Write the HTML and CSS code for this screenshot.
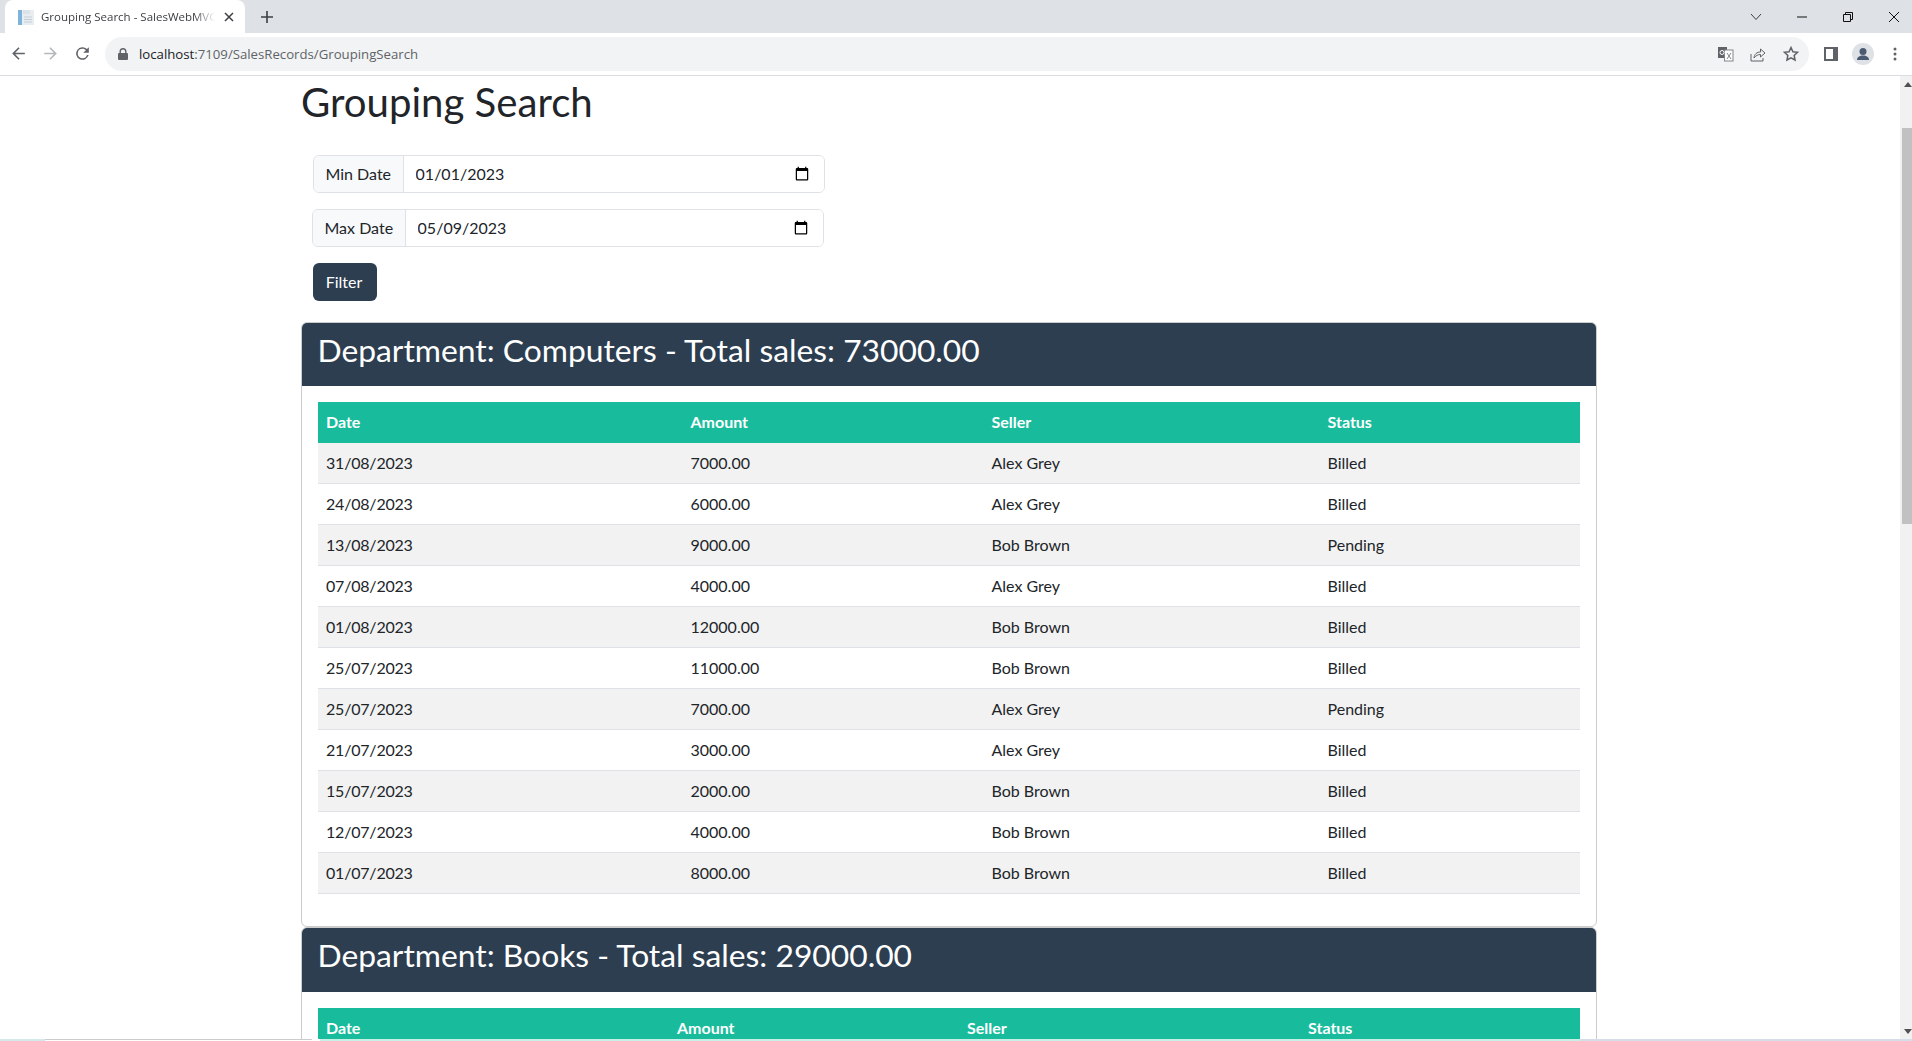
FILE: index.html
```html
<!DOCTYPE html>
<html lang="en">
<head>
<meta charset="utf-8">
<title>Grouping Search - SalesWebMVC</title>
<link rel="stylesheet" href="styles.css">
</head>
<body>
<div class="browser">
  <header class="tabstrip">
    <div class="tab">
      <svg class="favicon" viewBox="0 0 16 16" width="16" height="16"><rect x="0" y="1" width="16" height="15" fill="#e8edf2"/><rect x="0" y="1" width="4" height="15" fill="#7fb4da"/><rect x="5" y="1" width="7" height="4" fill="#dbe2e8"/><path d="M6 8h8M6 10.500h8M6 13h8" stroke="#c5ced6" stroke-width="1"/></svg>
      <span class="tab-title">Grouping Search - SalesWebMVC</span>
      <svg class="tab-close" viewBox="0 0 10 10" width="10" height="10"><path d="M1 1l8 8M9 1l-8 8" stroke="#3c4043" stroke-width="1.500"/></svg>
    </div>
    <svg class="new-tab" viewBox="0 0 12 12" width="12" height="12"><path d="M6 0v12M0 6h12" stroke="#3c4043" stroke-width="1.600"/></svg>
    <div class="window-controls">
      <svg class="wc wc-chevron" viewBox="0 0 12 8" width="12" height="8"><path d="M1 1l5 5.500L11 1" fill="none" stroke="#3c4043" stroke-width="1"/></svg>
      <svg class="wc wc-min" viewBox="0 0 10 2" width="10" height="2"><path d="M0 1h10" stroke="#111" stroke-width="1"/></svg>
      <svg class="wc wc-max" viewBox="0 0 10 10" width="10" height="10"><path d="M2.500 2.500V.5h7v7h-2M.5 2.500h7v7h-7z" fill="none" stroke="#111" stroke-width="1"/></svg>
      <svg class="wc wc-close" viewBox="0 0 10 10" width="10" height="10"><path d="M0 0l10 10M10 0L0 10" stroke="#111" stroke-width="1"/></svg>
    </div>
  </header>
  <nav class="toolbar">
    <svg class="nav-btn" viewBox="0 0 24 24" width="19" height="19"><path fill="#5f6368" d="M20 11H7.830l5.590-5.590L12 4l-8 8 8 8 1.410-1.410L7.830 13H20v-2z"/></svg>
    <svg class="nav-btn" viewBox="0 0 24 24" width="19" height="19"><path fill="#b4b7bb" d="M4 11h12.170l-5.590-5.590L12 4l8 8-8 8-1.410-1.410L16.170 13H4v-2z"/></svg>
    <svg class="nav-btn" viewBox="0 0 24 24" width="19" height="19"><path fill="#5f6368" d="M17.650 6.350A8 8 0 1 0 19.730 14h-2.080A6 6 0 1 1 12 6c1.660 0 3.140.69 4.220 1.780L13 11h7V4l-2.350 2.350z"/></svg>
    <div class="omnibox">
      <svg class="lock" viewBox="0 0 10 12" width="10" height="12"><path fill="#5f6368" d="M1.500 5V3.500a3.500 3.500 0 0 1 7 0V5h.5a1 1 0 0 1 1 1v5a1 1 0 0 1-1 1H1a1 1 0 0 1-1-1V6a1 1 0 0 1 1-1zm1.400 0h4.200V3.500a2.100 2.100 0 0 0-4.200 0z"/></svg>
      <span class="url"><span class="url-host">localhost</span>:7109/SalesRecords/GroupingSearch</span>
      <div class="omni-actions">
        <svg viewBox="0 0 16 16" width="16" height="16"><rect x="0" y="1" width="9" height="11" fill="#5f6368"/><rect x="6.500" y="4" width="8.500" height="11" fill="#fff" stroke="#80868b"/><circle cx="4" cy="6.500" r="2" fill="none" stroke="#fff"/><path d="M9 7l4 6M13 7l-4 6" stroke="#80868b"/></svg>
        <svg viewBox="0 0 16 16" width="16" height="16"><path d="M1 8v7h12v-3" fill="none" stroke="#5f6368"/><path d="M4 12c.3-4 3-6 6.500-6V3l4.500 4-4.500 4V8.500C8 8.500 6 9.500 4 12z" fill="none" stroke="#5f6368"/></svg>
        <svg viewBox="0 0 24 24" width="18" height="18"><path fill="none" stroke="#5f6368" stroke-width="2" d="M12 3.500l2.600 5.600 6.100.7-4.500 4.200 1.200 6-5.400-3-5.400 3 1.200-6-4.500-4.200 6.100-.7z"/></svg>
      </div>
    </div>
    <div class="toolbar-end">
      <svg viewBox="0 0 14 14" width="14" height="14"><rect width="14" height="14" fill="#5f6368"/><rect x="2" y="2" width="7" height="10" fill="#fff"/></svg>
      <svg viewBox="0 0 22 22" width="22" height="22"><circle cx="11" cy="11" r="11" fill="#dee1e6"/><circle cx="11" cy="8.500" r="3.500" fill="#4a5a70"/><path d="M5 17c0-3 2.500-4.500 6-4.500s6 1.500 6 4.500z" fill="#4a5a70"/></svg>
      <svg viewBox="0 0 4 14" width="4" height="14"><circle cx="2" cy="2" r="1.500" fill="#5f6368"/><circle cx="2" cy="7" r="1.500" fill="#5f6368"/><circle cx="2" cy="12" r="1.500" fill="#5f6368"/></svg>
    </div>
  </nav>
  <div class="viewport">
    <main class="page">
      <div class="container">
        <h1 class="title">Grouping Search</h1>
        <form class="filter">
          <div class="input-group">
            <span class="input-label">Min Date</span>
            <input class="input-date" type="date" value="2023-01-01">
          </div>
          <div class="input-group input-group-max">
            <span class="input-label">Max Date</span>
            <input class="input-date" type="date" value="2023-05-09">
          </div>
          <button class="btn" type="button">Filter</button>
        </form>
        <section class="card">
          <div class="card-header"><h2 class="card-title">Department: Computers - Total sales: 73000.00</h2></div>
          <div class="card-body">
            <table class="table table-computers">
              <colgroup><col class="c1"><col class="c2"><col class="c3"><col class="c4"></colgroup>
              <thead><tr><th>Date</th><th>Amount</th><th>Seller</th><th>Status</th></tr></thead>
              <tbody>
                <tr><td>31/08/2023</td><td>7000.00</td><td>Alex Grey</td><td>Billed</td></tr>
                <tr><td>24/08/2023</td><td>6000.00</td><td>Alex Grey</td><td>Billed</td></tr>
                <tr><td>13/08/2023</td><td>9000.00</td><td>Bob Brown</td><td>Pending</td></tr>
                <tr><td>07/08/2023</td><td>4000.00</td><td>Alex Grey</td><td>Billed</td></tr>
                <tr><td>01/08/2023</td><td>12000.00</td><td>Bob Brown</td><td>Billed</td></tr>
                <tr><td>25/07/2023</td><td>11000.00</td><td>Bob Brown</td><td>Billed</td></tr>
                <tr><td>25/07/2023</td><td>7000.00</td><td>Alex Grey</td><td>Pending</td></tr>
                <tr><td>21/07/2023</td><td>3000.00</td><td>Alex Grey</td><td>Billed</td></tr>
                <tr><td>15/07/2023</td><td>2000.00</td><td>Bob Brown</td><td>Billed</td></tr>
                <tr><td>12/07/2023</td><td>4000.00</td><td>Bob Brown</td><td>Billed</td></tr>
                <tr><td>01/07/2023</td><td>8000.00</td><td>Bob Brown</td><td>Billed</td></tr>
              </tbody>
            </table>
          </div>
        </section>
        <section class="card card-next">
          <div class="card-header"><h2 class="card-title">Department: Books - Total sales: 29000.00</h2></div>
          <div class="card-body">
            <table class="table table-books">
              <colgroup><col class="c1"><col class="c2"><col class="c3"><col class="c4"></colgroup>
              <thead><tr><th>Date</th><th>Amount</th><th>Seller</th><th>Status</th></tr></thead>
            </table>
          </div>
        </section>
      </div>
    </main>
    <aside class="scrollbar">
      <span class="arrow arrow-up"></span>
      <span class="thumb"></span>
      <span class="arrow arrow-down"></span>
    </aside>
  </div>
  <div class="bottom-edge"><span class="bottom-edge-gap"></span></div>
</div>
</body>
</html>
```
FILE: styles.css
```css
* { box-sizing: border-box; }
html, body { margin: 0; height: 100%; overflow: hidden; background: #fff; }
body { font-family: "Lato", "Liberation Sans", sans-serif; font-size: 16px; line-height: 1.5; color: #212529; }

.browser { height: 1041px; display: flex; flex-direction: column; overflow: hidden; }

.tabstrip { height: 33px; flex: none; background: #dee1e6; display: flex; align-items: flex-end; padding-left: 5px; font-family: "Open Sans", "Liberation Sans", sans-serif; }
.tab { width: 240px; height: 33px; background: #fff; border-radius: 8px 8px 0 0; display: flex; align-items: center; padding: 0 11px 0 13px; }
.favicon { flex: none; }
.tab-title { flex: 1; margin-left: 7px; font-size: 11.500px; color: #3c4043; white-space: nowrap; overflow: hidden; -webkit-mask-image: linear-gradient(90deg, #000 88%, transparent 100%); mask-image: linear-gradient(90deg, #000 88%, transparent 100%); }
.tab-close { flex: none; margin-left: 9px; }
.new-tab { align-self: center; margin-left: 16px; }
.window-controls { margin-left: auto; height: 100%; display: flex; align-items: center; padding-right: 13px; }
.wc { display: block; }
.wc-min { margin-left: 35px; }
.wc-max { margin-left: 36px; }
.wc-close { margin-left: 36px; }

.toolbar { height: 43px; flex: none; background: #fff; border-bottom: 1px solid #dadce0; display: flex; align-items: center; padding: 0 0 1px 9px; font-family: "Open Sans", "Liberation Sans", sans-serif; }
.nav-btn { flex: none; margin-right: 13px; }
.omnibox { width: 1704px; height: 34px; border-radius: 17px; background: #f1f3f4; display: flex; align-items: center; padding: 0 9px 0 13px; }
.lock { flex: none; }
.url { margin-left: 11px; font-size: 13.200px; color: #5f6368; white-space: nowrap; padding-top: 2px; }
.url-host { color: #202124; }
.omni-actions { margin-left: auto; display: flex; align-items: center; gap: 16px; }
.omni-actions svg { display: block; }
.toolbar-end { margin-left: 15px; display: flex; align-items: center; }
.toolbar-end svg { display: block; }
.toolbar-end svg:nth-child(2) { margin-left: 14px; }
.toolbar-end svg:nth-child(3) { margin-left: 19px; }

.viewport { flex: 1; min-height: 0; display: flex; overflow: hidden; }
.page { flex: 1; min-width: 0; overflow: hidden; }
.container { width: 1320px; margin: 0 auto; padding: 2px 13px 0 11px; }

.title { margin: 0 0 29px; font-size: 40.150px; font-weight: 400; line-height: 48px; color: #212529; }

.filter { display: flex; flex-direction: column; align-items: flex-start; gap: 16px; margin: 0 0 21px 12px; }
.input-group { width: 512px; height: 38px; display: flex; border: 1px solid #dee2e6; border-radius: 6px; overflow: hidden; }
.input-group-max { margin-left: -1px; }
.input-label { display: flex; align-items: center; padding: 0 11.500px; background: #f8f9fa; border-right: 1px solid #dee2e6; color: #212529; white-space: nowrap; }
.input-date { flex: 1; min-width: 0; border: 0; outline: 0; padding: 0 12px; background: #fff; font: inherit; color: #212529; }
.input-date::-webkit-datetime-edit-month-field,
.input-date::-webkit-datetime-edit-day-field,
.input-date::-webkit-datetime-edit-year-field,
.input-date::-webkit-datetime-edit-text { padding: 0; }
.btn { width: 64px; height: 38px; padding: 0 2px 0 0; border: 0; border-radius: 6px; background: #2c3e50; color: #fff; font: inherit; }

.card { border: 1px solid rgba(0, 0, 0, .2); border-radius: 6px; }
.card-header { background: #2c3e50; padding: 8px 16px 9px 15.500px; border-radius: 5px 5px 0 0; }
.card-title { margin: 0 0 8px; font-size: 31.800px; font-weight: 400; line-height: 38.400px; color: #fff; }
.card-body { padding: 16px; }

.table { width: 100%; table-layout: fixed; border-collapse: collapse; margin-bottom: 16px; }
.table th, .table td { padding: 8px; text-align: left; }
.table th { padding-bottom: 9px; background: #18bc9c; color: #fff; font-weight: 700; }
.table td { border-bottom: 1px solid #dee2e6; }
.table td:first-child { letter-spacing: -.2px; }
.table tbody tr:nth-child(odd) td { background: #f2f2f2; }

.table-computers .c1 { width: 364.5px; }
.table-computers .c2 { width: 301px; }
.table-computers .c3 { width: 336px; }
.table-books .c1 { width: 351px; }
.table-books .c2 { width: 290px; }
.table-books .c3 { width: 341px; }

.scrollbar { width: 12px; flex: none; background: #f1f1f1; position: relative; }
.thumb { position: absolute; left: 2px; right: 0; top: 52px; height: 396px; background: #c1c1c1; }
.arrow { position: absolute; left: 4px; width: 0; height: 0; border-left: 4px solid transparent; border-right: 4px solid transparent; }
.arrow-up { top: 6px; border-bottom: 5px solid #505050; }
.arrow-down { bottom: 7px; border-top: 5px solid #505050; }

.bottom-edge { position: absolute; left: 0; right: 0; top: 1039px; height: 2px; background: linear-gradient(90deg, #d3e8ea 0 45px, #fff 45px 320px, #c8efe6 320px 1580px, #d5dde8 1580px); }
.bottom-edge-gap { display: block; margin-left: 45px; width: 267px; height: 2px; border-top: 1px solid #ccc; }
```
